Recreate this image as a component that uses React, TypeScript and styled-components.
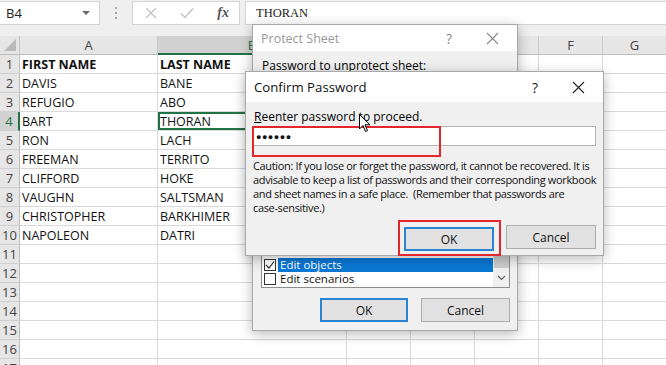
import React from "react";
import styled, { createGlobalStyle, css } from "styled-components";

const GlobalStyle = createGlobalStyle`
  html, body {
    margin: 0;
    padding: 0;
    background: #fff;
  }
  body {
    font-family: "Open Sans", "Liberation Sans", sans-serif;
    overflow: hidden;
  }
`;

const GREEN = "#217346";
const RED = "#e3262e";

const columns = ["A", "B", "C", "D", "E", "F", "G"];
const people: [string, string][] = [
  ["FIRST NAME", "LAST NAME"],
  ["DAVIS", "BANE"],
  ["REFUGIO", "ABO"],
  ["BART", "THORAN"],
  ["RON", "LACH"],
  ["FREEMAN", "TERRITO"],
  ["CLIFFORD", "HOKE"],
  ["VAUGHN", "SALTSMAN"],
  ["CHRISTOPHER", "BARKHIMER"],
  ["NAPOLEON", "DATRI"],
];
// only the bottom of the permission list shows below the confirm dialog
const permissions = [
  { label: "Edit objects", checked: true },
  { label: "Edit scenarios", checked: false },
];

export default function App() {
  const rows = Array.from({ length: 17 }, (_, i) => i + 1);
  return (
    <Screen>
      <GlobalStyle />
      <FormulaBar>
        <NameBox>
          <span>B4</span>
          <Caret />
        </NameBox>
        <Grip>
          <svg width="3" height="13" viewBox="0 0 3 13">
            <rect x="0" y="0" width="2" height="2" fill="#a8a8a8" />
            <rect x="0" y="5" width="2" height="2" fill="#a8a8a8" />
            <rect x="0" y="10" width="2" height="2" fill="#a8a8a8" />
          </svg>
        </Grip>
        <FxBox>
          <svg width="12" height="12" viewBox="0 0 12 12">
            <path d="M1 1 L11 11 M11 1 L1 11" stroke="#c2c2c2" strokeWidth="1.3" />
          </svg>
          <svg width="14" height="12" viewBox="0 0 14 12">
            <path d="M1 6.5 L5 10.5 L13 1.5" stroke="#c2c2c2" strokeWidth="1.5" fill="none" />
          </svg>
          <FxLabel>fx</FxLabel>
        </FxBox>
        <FormulaInput>THORAN</FormulaInput>
      </FormulaBar>

      <Sheet>
        <Corner>
          <svg width="12" height="12" viewBox="0 0 12 12">
            <polygon points="12,0 12,12 0,12" fill="#b9b9b9" />
          </svg>
        </Corner>
        {columns.map((c) => (
          <ColHead key={c} $active={c === "B"}>
            {c}
          </ColHead>
        ))}
        {rows.map((r) => {
          const data = people[r - 1];
          return (
            <React.Fragment key={r}>
              <RowHead $active={r === 4}>{r}</RowHead>
              {columns.map((c, ci) => (
                <Cell key={c} $bold={r === 1} $selected={r === 4 && c === "B"}>
                  {data && ci < 2 ? data[ci] : ""}
                </Cell>
              ))}
            </React.Fragment>
          );
        })}
      </Sheet>

      <ProtectDialog>
        <TitleBar $height={26}>
          <TitleText $inactive>Protect Sheet</TitleText>
          <TitleButtons $inactive>
            <span>?</span>
            <CloseIcon color="#8a8a8a" />
          </TitleButtons>
        </TitleBar>
        <ProtectBody>
          <Label>
            <u>P</u>assword to unprotect sheet:
          </Label>
          <ListBox>
            <ListItems>
              {permissions.map((p) => (
                <ListItem key={p.label}>
                  <CheckBox>
                    {p.checked && (
                      <svg width="10" height="10" viewBox="0 0 10 10">
                        <path d="M1 5 L4 8 L9 1.5" stroke="#333" strokeWidth="1.2" fill="none" />
                      </svg>
                    )}
                  </CheckBox>
                  <ItemText $selected={p.label === "Edit objects"}>{p.label}</ItemText>
                </ListItem>
              ))}
            </ListItems>
            <ScrollBar>
              <Thumb />
              <svg width="9" height="6" viewBox="0 0 9 6">
                <path d="M1 1 L4.5 4.5 L8 1" stroke="#606060" strokeWidth="1.2" fill="none" />
              </svg>
            </ScrollBar>
          </ListBox>
          <ButtonRow $gap={13}>
            <DialogButton $primary $width={88}>OK</DialogButton>
            <DialogButton $width={89}>Cancel</DialogButton>
          </ButtonRow>
        </ProtectBody>
      </ProtectDialog>

      <ConfirmDialog>
        <TitleBar $height={30}>
          <TitleText>Confirm Password</TitleText>
          <TitleButtons>
            <span>?</span>
            <CloseIcon color="#222" />
          </TitleButtons>
        </TitleBar>
        <ConfirmBody>
          <Label>
            <u>R</u>eenter password to proceed.
          </Label>
          <Marked>
            <PasswordInput>●●●●●●</PasswordInput>
            <RedMark $left={-1} $top={0} $width={189} $height={31} />
          </Marked>
          <Caution>
            Caution: If you lose or forget the password, it cannot be recovered. It is
            <br />
            advisable to keep a list of passwords and their corresponding workbook
            <br />
            and sheet names in a safe place.&nbsp; (Remember that passwords are
            <br />
            case-sensitive.)
          </Caution>
          <ButtonRow $gap={12}>
            <Marked>
              <DialogButton $primary $width={90}>OK</DialogButton>
              <RedMark $left={-6} $top={-7} $width={103} $height={36} />
            </Marked>
            <DialogButton $width={90}>Cancel</DialogButton>
          </ButtonRow>
        </ConfirmBody>
      </ConfirmDialog>

      <Cursor>
        <svg width="12" height="19" viewBox="0 0 12 19">
          <path
            d="M0.5 0.5 L0.5 15 L4 11.5 L6.5 17.5 L8.5 16.7 L6 10.8 L11 10.8 Z"
            fill="#fff"
            stroke="#000"
            strokeWidth="1"
          />
        </svg>
      </Cursor>
    </Screen>
  );
}

function CloseIcon({ color }: { color: string }) {
  return (
    <svg width="13" height="13" viewBox="0 0 13 13">
      <path d="M1 1 L12 12 M12 1 L1 12" stroke={color} strokeWidth="1.1" />
    </svg>
  );
}

const Screen = styled.div`
  position: relative;
  width: 666px;
  height: 365px;
  overflow: hidden;
  background: #fff;
`;

const FormulaBar = styled.div`
  display: flex;
  align-items: flex-start;
  height: 36px;
  padding-top: 1px;
  box-sizing: border-box;
  background: #efefef;
`;

const NameBox = styled.div`
  width: 100px;
  height: 24px;
  box-sizing: border-box;
  display: flex;
  align-items: center;
  justify-content: space-between;
  padding: 0 9px 0 6px;
  background: #fff;
  border: 1px solid #d4d4d4;
  border-left: none;
  font-size: 13px;
  color: #222;
`;

const Caret = styled.span`
  width: 0;
  height: 0;
  border-left: 4px solid transparent;
  border-right: 4px solid transparent;
  border-top: 4px solid #6a6a6a;
`;

const Grip = styled.div`
  width: 32px;
  height: 24px;
  display: flex;
  align-items: center;
  justify-content: center;
`;

const FxBox = styled.div`
  width: 108px;
  height: 24px;
  box-sizing: border-box;
  display: flex;
  align-items: center;
  justify-content: space-between;
  padding: 0 10px 0 12px;
  background: #fff;
  border: 1px solid #d4d4d4;
`;

const FxLabel = styled.span`
  font-family: "Liberation Serif", "DejaVu Serif", serif;
  font-style: italic;
  font-weight: bold;
  font-size: 14px;
  color: #555;
`;

const FormulaInput = styled.div`
  flex: 1;
  margin-left: 5px;
  height: 24px;
  box-sizing: border-box;
  display: flex;
  align-items: center;
  padding-left: 10px;
  background: #fff;
  border: 1px solid #d4d4d4;
  border-right: none;
  font-family: "Liberation Serif", "DejaVu Serif", serif;
  font-size: 12.5px;
  color: #222;
`;

const Sheet = styled.div`
  display: grid;
  grid-template-columns: 20px 138px 189px 64px 64px 64px 64px 64px;
  grid-auto-rows: 19px;
  font-size: 12.5px;
  color: #111;
`;

const headBase = css`
  box-sizing: border-box;
  display: flex;
  align-items: center;
  justify-content: center;
  background: #e6e6e6;
  color: #444;
  font-size: 13px;
`;

const Corner = styled.div`
  ${headBase};
  align-items: flex-end;
  justify-content: flex-end;
  padding: 0 3px 3px 0;
  border-right: 1px solid #c6c6c6;
  border-bottom: 1px solid #bdbdbd;
`;

const ColHead = styled.div<{ $active?: boolean }>`
  ${headBase};
  border-right: 1px solid #cacaca;
  border-bottom: 1px solid #bdbdbd;
  ${(p) =>
    p.$active &&
    css`
      background: #d2d2d2;
      color: ${GREEN};
      border-bottom: 2px solid ${GREEN};
    `}
`;

const RowHead = styled.div<{ $active?: boolean }>`
  ${headBase};
  border-right: 1px solid #bdbdbd;
  border-bottom: 1px solid #d0d0d0;
  ${(p) =>
    p.$active &&
    css`
      background: #d2d2d2;
      color: ${GREEN};
      border-right: 2px solid ${GREEN};
    `}
`;

const Cell = styled.div<{ $bold?: boolean; $selected?: boolean }>`
  box-sizing: border-box;
  display: flex;
  align-items: center;
  padding: 1px 0 0 2px;
  white-space: nowrap;
  overflow: hidden;
  border-right: 1px solid #dadada;
  border-bottom: 1px solid #dadada;
  font-weight: ${(p) => (p.$bold ? 700 : 400)};
  ${(p) =>
    p.$selected &&
    css`
      box-shadow: inset 0 0 0 2px ${GREEN};
    `}
`;

const dialogBase = css`
  position: absolute;
  box-sizing: border-box;
  display: flex;
  flex-direction: column;
  background: #f0f0f0;
  border: 1px solid #a8a8a8;
  box-shadow: 0 3px 12px rgba(0, 0, 0, 0.28);
  font-size: 12px;
  color: #000;
`;

const ProtectDialog = styled.div`
  ${dialogBase};
  left: 252px;
  top: 24px;
  width: 266px;
  height: 307px;
  z-index: 1;
`;

const ConfirmDialog = styled.div`
  ${dialogBase};
  left: 245px;
  top: 71px;
  width: 359px;
  height: 185px;
  z-index: 2;
`;

const TitleBar = styled.div<{ $height: number }>`
  height: ${(p) => p.$height}px;
  flex-shrink: 0;
  display: flex;
  align-items: center;
  justify-content: space-between;
  padding: 0 18px 0 8px;
  background: #fff;
`;

const TitleText = styled.span<{ $inactive?: boolean }>`
  font-size: ${(p) => (p.$inactive ? 12.5 : 13.2)}px;
  color: ${(p) => (p.$inactive ? "#9a9a9a" : "#111")};
`;

const TitleButtons = styled.div<{ $inactive?: boolean }>`
  display: flex;
  align-items: center;
  gap: 34px;
  font-size: 14px;
  color: ${(p) => (p.$inactive ? "#8a8a8a" : "#222")};
`;

const ProtectBody = styled.div`
  flex: 1;
  display: flex;
  flex-direction: column;
  padding: 8px 7px 8px 8px;
`;

const ConfirmBody = styled.div`
  flex: 1;
  display: flex;
  flex-direction: column;
  padding: 8px 7px 0 7px;
`;

const Label = styled.div`
  line-height: 14px;
  padding-left: 1px;
  white-space: nowrap;
`;

const Marked = styled.div`
  position: relative;
  margin-top: 2px;
`;

const PasswordInput = styled.div`
  height: 20px;
  box-sizing: border-box;
  display: flex;
  align-items: center;
  padding-left: 2px;
  background: #fff;
  border: 1px solid #b4b4b4;
  font-size: 9px;
  letter-spacing: 0.5px;
  color: #111;
`;

const RedMark = styled.div<{
  $left: number;
  $top: number;
  $width: number;
  $height: number;
}>`
  position: absolute;
  left: ${(p) => p.$left}px;
  top: ${(p) => p.$top}px;
  width: ${(p) => p.$width}px;
  height: ${(p) => p.$height}px;
  box-sizing: border-box;
  border: 2px solid ${RED};
  pointer-events: none;
`;

const Caution = styled.div`
  margin-top: 13px;
  font-size: 11px;
  letter-spacing: -0.35px;
  line-height: 14px;
  white-space: nowrap;
  color: #111;
`;

const ButtonRow = styled.div<{ $gap: number }>`
  display: flex;
  justify-content: flex-end;
  gap: ${(p) => p.$gap}px;
  margin-top: 10px;
`;

const DialogButton = styled.div<{ $primary?: boolean; $width: number }>`
  width: ${(p) => p.$width}px;
  height: 24px;
  box-sizing: border-box;
  display: flex;
  align-items: center;
  justify-content: center;
  background: #e1e1e1;
  border: ${(p) => (p.$primary ? "2px solid #2a84d2" : "1px solid #adadad")};
  font-size: 12px;
  color: #111;
`;

const ListBox = styled.div`
  margin-top: auto;
  height: 33px;
  display: flex;
  box-sizing: border-box;
  background: #fff;
  border: 1px solid #8c8c8c;
  overflow: hidden;
`;

const ListItems = styled.div`
  flex: 1;
  display: flex;
  flex-direction: column;
  justify-content: flex-end;
  padding-bottom: 1px;
`;

const ListItem = styled.div`
  height: 14px;
  display: flex;
  align-items: center;
  padding-left: 2px;
`;

const CheckBox = styled.span`
  width: 12px;
  height: 12px;
  box-sizing: border-box;
  display: flex;
  align-items: center;
  justify-content: center;
  margin-right: 2px;
  background: #fff;
  border: 1px solid #333;
`;

const ItemText = styled.span<{ $selected?: boolean }>`
  flex: 1;
  height: 14px;
  line-height: 14px;
  padding-left: 2px;
  white-space: nowrap;
  font-size: 11.5px;
  background: ${(p) => (p.$selected ? "#0a78d4" : "transparent")};
  color: ${(p) => (p.$selected ? "#fff" : "#111")};
`;

const ScrollBar = styled.div`
  width: 16px;
  display: flex;
  flex-direction: column;
  align-items: center;
  justify-content: flex-end;
  gap: 7px;
  padding-bottom: 6px;
  background: #f0f0f0;
`;

const Thumb = styled.div`
  width: 15px;
  height: 12px;
  background: #cdcdcd;
`;

const Cursor = styled.div`
  position: absolute;
  left: 359px;
  top: 114px;
  z-index: 5;
  line-height: 0;
`;
